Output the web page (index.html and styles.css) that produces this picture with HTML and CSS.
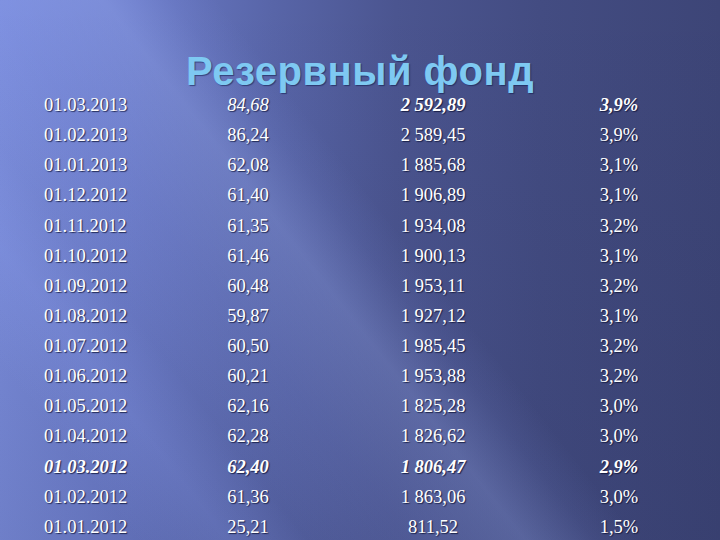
FILE: index.html
```html
<!DOCTYPE html>
<html lang="ru">
<head>
<meta charset="utf-8">
<title>Резервный фонд</title>
<link rel="stylesheet" href="styles.css">
</head>
<body>
<div class="slide">
  <h1 class="title">Резервный фонд</h1>
  <div class="table">
    <div class="row"><span class="c1">01.03.2013</span><span class="c2 it">84,68</span><span class="c3 bi">2 592,89</span><span class="c4 bi">3,9%</span></div>
    <div class="row"><span class="c1">01.02.2013</span><span class="c2">86,24</span><span class="c3">2 589,45</span><span class="c4">3,9%</span></div>
    <div class="row"><span class="c1">01.01.2013</span><span class="c2">62,08</span><span class="c3">1 885,68</span><span class="c4">3,1%</span></div>
    <div class="row"><span class="c1">01.12.2012</span><span class="c2">61,40</span><span class="c3">1 906,89</span><span class="c4">3,1%</span></div>
    <div class="row"><span class="c1">01.11.2012</span><span class="c2">61,35</span><span class="c3">1 934,08</span><span class="c4">3,2%</span></div>
    <div class="row"><span class="c1">01.10.2012</span><span class="c2">61,46</span><span class="c3">1 900,13</span><span class="c4">3,1%</span></div>
    <div class="row"><span class="c1">01.09.2012</span><span class="c2">60,48</span><span class="c3">1 953,11</span><span class="c4">3,2%</span></div>
    <div class="row"><span class="c1">01.08.2012</span><span class="c2">59,87</span><span class="c3">1 927,12</span><span class="c4">3,1%</span></div>
    <div class="row"><span class="c1">01.07.2012</span><span class="c2">60,50</span><span class="c3">1 985,45</span><span class="c4">3,2%</span></div>
    <div class="row"><span class="c1">01.06.2012</span><span class="c2">60,21</span><span class="c3">1 953,88</span><span class="c4">3,2%</span></div>
    <div class="row"><span class="c1">01.05.2012</span><span class="c2">62,16</span><span class="c3">1 825,28</span><span class="c4">3,0%</span></div>
    <div class="row"><span class="c1">01.04.2012</span><span class="c2">62,28</span><span class="c3">1 826,62</span><span class="c4">3,0%</span></div>
    <div class="row"><span class="c1 bi">01.03.2012</span><span class="c2 bi">62,40</span><span class="c3 bi">1 806,47</span><span class="c4 bi">2,9%</span></div>
    <div class="row"><span class="c1">01.02.2012</span><span class="c2">61,36</span><span class="c3">1 863,06</span><span class="c4">3,0%</span></div>
    <div class="row"><span class="c1">01.01.2012</span><span class="c2">25,21</span><span class="c3">811,52</span><span class="c4">1,5%</span></div>
  </div>
</div>
</body>
</html>
```

FILE: styles.css
```css
html, body {
  margin: 0;
  padding: 0;
}
body {
  width: 720px;
  height: 540px;
  overflow: hidden;
}
.slide {
  width: 720px;
  height: 540px;
  overflow: hidden;
  box-sizing: border-box;
  padding-top: 52px;
  background:
    linear-gradient(52deg,
      rgba(150,170,255,0) 12%,
      rgba(150,170,255,0.16) 20%,
      rgba(150,170,255,0.04) 27%,
      rgba(150,170,255,0.14) 36%,
      rgba(165,185,255,0.26) 46%,
      rgba(150,170,255,0.08) 52%,
      rgba(150,170,255,0) 56%),
    linear-gradient(to bottom, rgba(20,25,60,0) 0%, rgba(20,25,60,0.12) 100%),
    linear-gradient(to right, #7b8ddc 0%, #6b7bc8 18%, #5865a8 38%, #4b5590 55%, #434c82 75%, #3d4577 100%);
}
.title {
  margin: 0;
  padding-left: 186px;
  font-family: "Liberation Sans", Arial, sans-serif;
  font-weight: bold;
  font-size: 40px;
  letter-spacing: 0.5px;
  line-height: 38px;
  color: #7ec9f2;
  text-shadow: 1px 1px 1px rgba(20,30,80,0.6);
  white-space: nowrap;
}
.table {
  display: flex;
  flex-direction: column;
}
.row {
  display: grid;
  grid-template-columns: 44px 124px 160px 210px 162px;
  height: 30.14px;
  line-height: 30.14px;
  font-family: "Liberation Serif", "Times New Roman", serif;
  font-size: 18.5px;
  color: #ffffff;
  text-shadow: 1px 1px 1px rgba(10,15,50,0.75);
  white-space: nowrap;
}
.c1 { grid-column: 2; text-align: left; }
.c2 { grid-column: 3; text-align: center; }
.c3 { grid-column: 4; text-align: center; }
.c4 { grid-column: 5; text-align: center; }
.it { font-style: italic; }
.bi { font-style: italic; font-weight: bold; }
```
